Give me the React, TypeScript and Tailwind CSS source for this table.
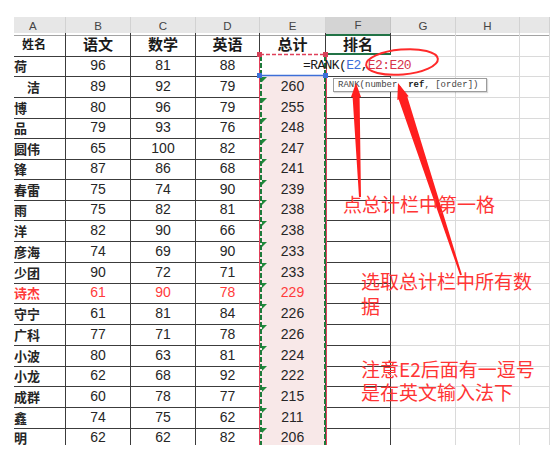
type Row = { name: string; b: number; c: number; d: number; e?: number; h: 20 | 21; red?: boolean };

const rows: Row[] = [
  { name: "　荷", b: 96, c: 81, d: 88, h: 21 },
  { name: "　　洁", b: 89, c: 92, d: 79, e: 260, h: 21 },
  { name: "　博", b: 80, c: 96, d: 79, e: 255, h: 20 },
  { name: "　品", b: 79, c: 93, d: 76, e: 248, h: 21 },
  { name: "　圆伟", b: 65, c: 100, d: 82, e: 247, h: 20 },
  { name: "　锋", b: 87, c: 86, d: 68, e: 241, h: 21 },
  { name: "　春雷", b: 75, c: 74, d: 90, e: 239, h: 20 },
  { name: "　雨", b: 75, c: 82, d: 81, e: 238, h: 21 },
  { name: "　洋", b: 82, c: 90, d: 66, e: 238, h: 21 },
  { name: "　彦海", b: 74, c: 69, d: 90, e: 233, h: 21 },
  { name: "　少团", b: 90, c: 72, d: 71, e: 233, h: 20 },
  { name: "　诗杰", b: 61, c: 90, d: 78, e: 229, h: 21, red: true },
  { name: "　守宁", b: 61, c: 81, d: 84, e: 226, h: 21 },
  { name: "　广科", b: 77, c: 71, d: 78, e: 226, h: 21 },
  { name: "　小波", b: 80, c: 63, d: 81, e: 224, h: 20 },
  { name: "　小龙", b: 62, c: 68, d: 92, e: 222, h: 21 },
  { name: "　成群", b: 60, c: 78, d: 77, e: 215, h: 21 },
  { name: "　鑫", b: 74, c: 75, d: 62, e: 211, h: 20 },
  { name: "　明", b: 62, c: 62, d: 82, e: 206, h: 21 },
];

const hCls = { 20: "h-[20px]", 21: "h-[21px]" };

const COLS = "grid grid-cols-[52px_65px_65px_64px_66px_65px_65px_64px_30px]";
const DARK = "flex items-center justify-center border-r border-b border-[#3c3c3c]";
const LIGHT = "border-r border-b border-[#dadada]";
const HEAD = "flex items-center justify-center border-r border-b border-r-[#d2d2d2] border-b-[#a3a3a3]";

// top y of each data row, used for the little green triangles
const tops: number[] = [];
rows.reduce((y, r) => {
  tops.push(y);
  return y + r.h;
}, 55);

function SelectionMarks() {
  return (
    <svg className="absolute inset-0 pointer-events-none" width={560} height={469}>
      {/* E2:E20 ref box */}
      <line x1={259.5} y1={54} x2={259.5} y2={445} stroke="#e0405a" strokeWidth={1} />
      <line x1={326.5} y1={54} x2={326.5} y2={445} stroke="#e0405a" strokeWidth={1} />
      <line x1={260} y1={54.5} x2={326} y2={54.5} stroke="#e0405a" strokeWidth={1.5} strokeDasharray="4 2" />
      <line x1={326} y1={54} x2={391} y2={54} stroke="#217346" strokeWidth={2} />
      {/* marching ants */}
      <line x1={261} y1={56} x2={261} y2={445} stroke="#1d7a3a" strokeWidth={2} strokeDasharray="5 2" />
      <line x1={325} y1={56} x2={325} y2={445} stroke="#1d7a3a" strokeWidth={2} strokeDasharray="5 2" />
      {tops.slice(1).map((t) => (
        <polygon key={t} points={`262,${t + 1} 267,${t + 1} 262,${t + 6}`} fill="#1e8a3a" />
      ))}
      {/* E2 blue box */}
      <line x1={260} y1={75.5} x2={326} y2={75.5} stroke="#3d6fd8" strokeWidth={1.5} />
      <rect x={257} y={52} width={5} height={5} fill="#d64058" />
      <rect x={323} y={52} width={5} height={5} fill="#d64058" />
      <rect x={257} y={73} width={5} height={5} fill="#3d6fd8" />
      <rect x={323} y={73} width={5} height={5} fill="#3d6fd8" />
    </svg>
  );
}

function Annotations() {
  return (
    <svg className="absolute inset-0 pointer-events-none" width={560} height={469}>
      <ellipse cx={402} cy={62} rx={36} ry={12.5} transform="rotate(-5 402 62)" fill="none" stroke="#ff2a2a" strokeWidth={2} />
      <polygon points="356,83 361,97 359.6,97 361,197 359,197 352.6,97 351,97" fill="#ff1f1f" />
      <polygon points="398,83 408.7,96.3 407.3,96.8 461.9,274.7 460.1,275.3 398.7,99.6 397.3,100.1" fill="#ff1f1f" />
    </svg>
  );
}

export default function App() {
  return (
    <div className="relative w-[560px] h-[469px] bg-white overflow-hidden font-['Liberation_Sans','Noto_Sans_CJK_SC',sans-serif]">
      <div className="pt-[17px] pl-[14px]">
        <div className="w-[536px] h-[428px] overflow-hidden">
          {/* column letters */}
          <div className={`${COLS} h-[16px] bg-[#e7e7e7] text-[11.5px] text-[#444]`}>
            <div className={`${HEAD} !justify-start pl-[15px]`}>A</div>
            <div className={HEAD}>B</div>
            <div className={HEAD}>C</div>
            <div className={HEAD}>D</div>
            <div className={HEAD}>E</div>
            <div className="flex items-center justify-center border-r border-r-[#c4c4c4] border-b-2 border-b-[#217346] bg-[#d4d4d4]">F</div>
            <div className={HEAD}>G</div>
            <div className={HEAD}>H</div>
            <div className={HEAD}></div>
          </div>

          {/* titles */}
          <div className={`${COLS} h-[22px] font-bold text-[15px] text-[#1a1a1a] font-['Noto_Sans_CJK_SC',sans-serif]`}>
            <div className={`${DARK} !justify-start pl-[8px] text-[12px]`}>姓名</div>
            <div className={DARK}>语文</div>
            <div className={DARK}>数学</div>
            <div className={DARK}>英语</div>
            <div className={DARK}>总计</div>
            <div className={DARK}>排名</div>
            <div className={LIGHT}></div>
            <div className={LIGHT}></div>
            <div className={LIGHT}></div>
          </div>

          {rows.map((r, i) => (
            <div
              key={i}
              className={`${COLS} ${hCls[r.h]} text-[14px] ${r.red ? "text-[#ff3b3b]" : "text-[#262626]"}`}
            >
              <div className={`${DARK} !justify-start overflow-hidden`}>
                <span className="-ml-[13px] whitespace-nowrap font-bold text-[13px] font-['Noto_Sans_CJK_SC',sans-serif]">
                  {r.name}
                </span>
              </div>
              <div className={DARK}>{r.b}</div>
              <div className={DARK}>{r.c}</div>
              <div className={DARK}>{r.d}</div>
              {i === 0 ? (
                <>
                  <div className="flex items-center border-b border-[#3c3c3c] bg-white">
                    <span className="relative z-10 pl-[43px] whitespace-nowrap font-['Liberation_Mono',monospace] text-[13px] tracking-[-0.6px] text-[#1a1a1a]">
                      =RANK(<span className="text-[#3d6fd8]">E2</span>,<span className="text-[#d6334a]">E2:E20</span>
                    </span>
                  </div>
                  <div className="border-b border-[#3c3c3c] bg-white"></div>
                </>
              ) : (
                <>
                  <div className={`${DARK} bg-[#f8e8e8]`}>{r.e}</div>
                  <div className={DARK}></div>
                </>
              )}
              <div className={LIGHT}></div>
              <div className={LIGHT}></div>
              <div className={LIGHT}></div>
            </div>
          ))}
        </div>
      </div>

      <SelectionMarks />

      {/* function tooltip */}
      <div className="absolute left-[333px] top-[78px] w-[154px] h-[14px] bg-white border border-[#9c9c9c] shadow-[1px_1px_1px_rgba(0,0,0,0.15)] pl-[4px] text-[9px] leading-[12px] text-[#444] font-['Liberation_Mono',monospace] whitespace-nowrap">
        RANK(number, <b className="text-[#222]">ref</b>, [order])
      </div>

      <Annotations />

      <div className="absolute left-[343px] top-[194px] text-[19px] leading-[19px] text-[#ff3535] font-['Noto_Sans_CJK_SC',sans-serif] whitespace-nowrap">
        点总计栏中第一格
      </div>
      <div className="absolute left-[361px] top-[268px] text-[19px] leading-[25px] text-[#ff3535] font-['Noto_Sans_CJK_SC',sans-serif] whitespace-nowrap">
        选取总计栏中所有数
        <br />
        据
      </div>
      <div className="absolute left-[361px] top-[357px] text-[19px] leading-[23px] text-[#ff3535] font-['Noto_Sans_CJK_SC',sans-serif] whitespace-nowrap">
        注意E2后面有一逗号
        <br />
        是在英文输入法下
      </div>
    </div>
  );
}
